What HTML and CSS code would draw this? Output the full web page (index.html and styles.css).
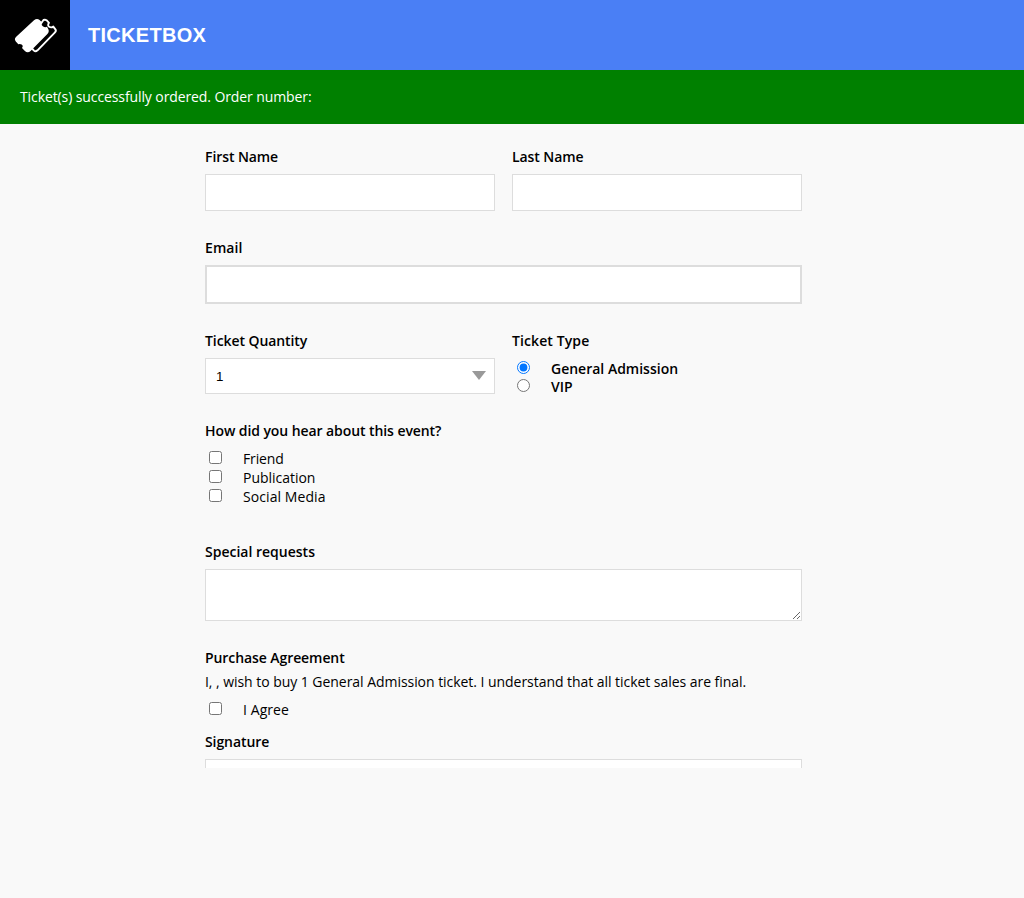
FILE: index.html
```html
<!DOCTYPE html>
<html lang="en">
<head>
<meta charset="utf-8">
<title>Ticketbox</title>
<link rel="stylesheet" href="styles.css">
</head>
<body>
<header class="topbar">
  <div class="logo">
    <svg class="logo-icon" width="44" height="38" viewBox="0 0 44 38" aria-hidden="true">
      <path d="M26 8 L29.5 3 Q31.2 2.4 32.5 3.2 L35 5.8 Q33.2 8.6 35.2 9.8 Q37.2 11 39.3 9.6 L41.4 12.4 Q42.5 14 41 15.3 L23.5 33.3 Q21.5 35 20 33.6 L18 31.5" fill="none" stroke="#fff" stroke-width="1.9" stroke-linejoin="round"/>
      <path d="M20 3.2 Q23 .8 25.6 3 L27.6 5 Q26.8 8 28.8 9.3 Q31 10.8 33 9.8 L34 11.4 Q35.8 14.4 33.4 17 L16.6 34 Q13.6 36.5 10.9 34 L8 31 Q9.6 28.8 7.6 27.5 Q6 26.4 4.3 27.3 L1.8 24.6 Q-.2 22 2.2 19.8 Z" fill="#fff"/>
    </svg>
  </div>
  <h1 class="brand">TICKETBOX</h1>
</header>
<div class="notice">Ticket(s) successfully ordered. Order number:</div>
<main class="page">
  <form class="form">
    <div class="row names">
      <div class="field">
        <label class="label" for="first">First Name</label>
        <input class="input" id="first" type="text">
      </div>
      <div class="field">
        <label class="label" for="last">Last Name</label>
        <input class="input" id="last" type="text">
      </div>
    </div>
    <div class="field email">
      <label class="label label-wide" for="email">Email</label>
      <input class="input input-email" id="email" type="email">
    </div>
    <div class="row tickets">
      <div class="field">
        <label class="label" for="quantity">Ticket Quantity</label>
        <div class="select-wrap">
          <select class="select" id="quantity"><option>1</option><option>2</option><option>3</option></select>
          <svg class="arrow" width="14" height="9" viewBox="0 0 14 9" aria-hidden="true"><path d="M0 0H14L7 9Z" fill="#999"/></svg>
        </div>
      </div>
      <div class="field">
        <div class="label label-wide">Ticket Type</div>
        <div class="radios">
          <label class="radio-row"><input class="radio" type="radio" name="type" checked>General Admission</label>
          <label class="radio-row"><input class="radio" type="radio" name="type">VIP</label>
        </div>
      </div>
    </div>
    <div class="field source">
      <div class="label">How did you hear about this event?</div>
      <div class="checks">
        <label class="check-row check-tight"><input class="check" type="checkbox">Friend</label>
        <label class="check-row"><input class="check" type="checkbox">Publication</label>
        <label class="check-row check-wide"><input class="check" type="checkbox">Social Media</label>
      </div>
    </div>
    <div class="field requests">
      <label class="label label-plain" for="requests">Special requests</label>
      <textarea class="textarea" id="requests"></textarea>
    </div>
    <div class="field agreement">
      <div class="label">Purchase Agreement</div>
      <p class="terms">I, , wish to buy 1 General Admission ticket. I understand that all ticket sales are final.</p>
      <label class="check-row check-wide"><input class="check" type="checkbox">I Agree</label>
    </div>
    <div class="field signature">
      <label class="label" for="signature">Signature</label>
      <input class="input" id="signature" type="text">
    </div>
  </form>
</main>
</body>
</html>
```
FILE: styles.css
```css
* { box-sizing: border-box; }
body {
  margin: 0;
  background: #f9f9f9;
  color: #000;
  font: 14px/20px "Open Sans", "Noto Sans", sans-serif;
}
.topbar { display: flex; align-items: center; height: 70px; background: #4a7ff5; }
.logo { display: flex; align-items: center; justify-content: center; width: 70px; height: 70px; padding: 1px 0 0 2px; background: #000; }
.logo-icon { display: block; }
.brand { margin: 0 0 0 18px; color: #fff; font: bold 20px/24px "Liberation Sans", Arial, sans-serif; letter-spacing: .3px; }
.notice { height: 54px; padding: 17px 20px; background: #008000; color: #fff; letter-spacing: -.1px; }
.page { height: 644px; overflow: hidden; }
.form { width: 597px; margin-left: 205px; padding-top: 23px; }
.row { display: grid; grid-template-columns: 290px 290px; column-gap: 17px; }
.label { display: block; height: 20px; margin-bottom: 7px; font-weight: 600; letter-spacing: -.08px; white-space: nowrap; }
.label-wide { letter-spacing: .1px; }
.label-plain { letter-spacing: 0; }
.input, .select, .textarea {
  display: block;
  width: 100%;
  margin: 0;
  border: 1px solid #ddd;
  border-radius: 0;
  background: #fff;
  outline: none;
}
.input { height: 37px; }
.names, .email { margin-bottom: 27px; }
.input-email { height: 39px; border-width: 2px; }
.tickets { margin-bottom: 25px; }
.select-wrap { position: relative; }
.select { height: 36px; padding: 0 10px; appearance: none; color: #000; font: 13.333px "Liberation Sans", Arial, sans-serif; }
.arrow { position: absolute; right: 9px; top: 13px; }
.radios { padding-top: 2px; }
.radio-row { display: flex; height: 18px; line-height: 18px; font-weight: 600; white-space: nowrap; }
.radio { width: 13px; height: 13px; margin: 1px 21px 0 5px; }
.check-row { display: flex; height: 19px; line-height: 19px; letter-spacing: -.03px; white-space: nowrap; }
.check-tight { letter-spacing: -.15px; }
.check-wide { letter-spacing: .08px; }
.check { width: 13px; height: 13px; margin: 2px 21px 0 4px; }
.checks { padding-top: 1px; }
.source { margin-bottom: 36px; }
.textarea { height: 52px; resize: vertical; }
.requests { margin-bottom: 27px; }
.agreement .label { margin-bottom: 4px; }
.terms { height: 20px; margin: 0 0 8px; letter-spacing: -.045px; white-space: nowrap; }
.agreement { margin-bottom: 13px; }
```
